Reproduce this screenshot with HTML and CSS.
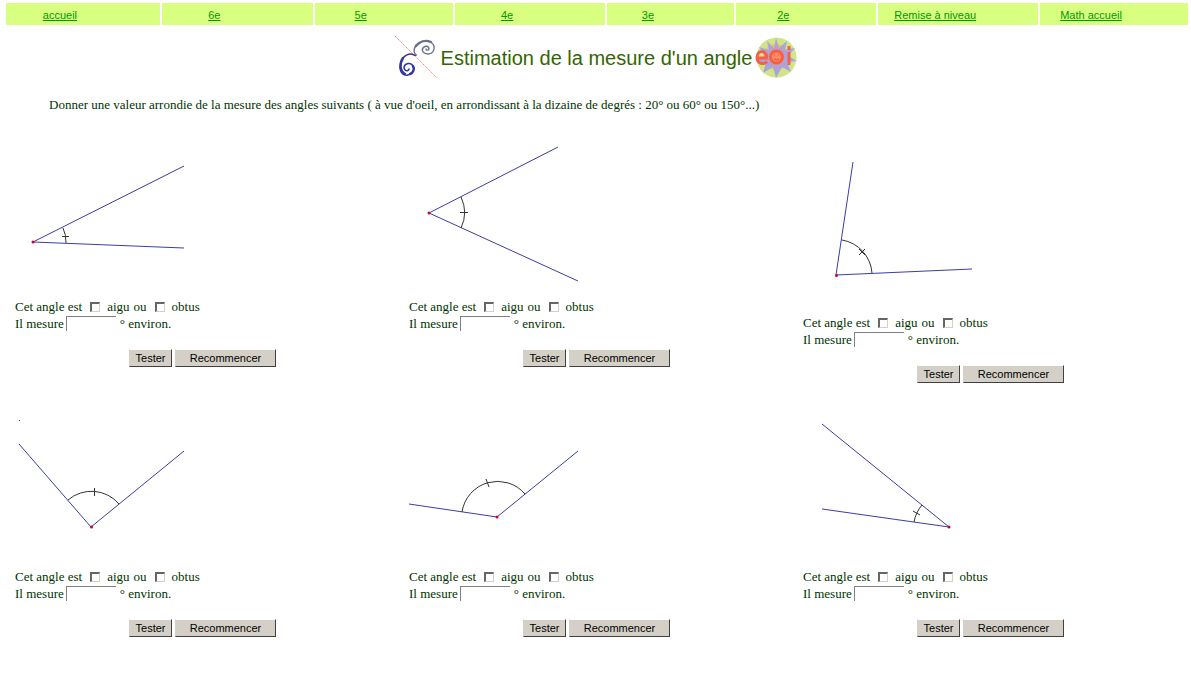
FILE: index.html
```html
<!DOCTYPE html>
<html lang="fr">
<head>
<meta charset="utf-8">
<title>Estimation de la mesure d'un angle</title>
<link rel="stylesheet" href="styles.css">
</head>
<body>
<nav class="menu">
  <span class="cell"><a href="#">accueil</a></span>
  <span class="cell"><a href="#">6e</a></span>
  <span class="cell"><a href="#">5e</a></span>
  <span class="cell"><a href="#">4e</a></span>
  <span class="cell"><a href="#">3e</a></span>
  <span class="cell"><a href="#">2e</a></span>
  <span class="cell"><a href="#">Remise à niveau</a></span>
  <span class="cell"><a href="#">Math accueil</a></span>
</nav>
<header class="title">
  <svg class="logo" viewBox="0 0 43 43" aria-hidden="true">
    <path d="M0 0L42 42" stroke="#ff8080" fill="none" stroke-dasharray="1.5 .7"/>
    <g fill="none" stroke="#3038a0" stroke-linecap="round">
      <path d="M21 19C19 20 18 18 16 18C9 18 5 25 5 31C5 37 9 40 13 39C18 38 20 34 18 30C16 26 10 27 9 31C9 35 13 36 14 33" stroke-width="1.5"/>
      <path d="M8 22C4 28 5 35 10 38M18 30C20 33 18 37 15 38" stroke-width="2.4"/>
    </g>
    <g fill="none" stroke="#6c6f8c" stroke-linecap="round">
      <path d="M21 19C17 15 20 9 24 7C29 3 37 5 39 10C40 15 37 18 33 18C29 18 26 15 28 12C30 9 34 10 34 13C33 15 31 14 31 13" stroke-width="1.4"/>
      <path d="M21 10C25 5 31 4 36 6" stroke-width="2.4"/>
    </g>
  </svg>
  <h1>Estimation de la mesure d'un angle</h1>
  <svg class="logo" viewBox="0 0 43 43" aria-hidden="true">
    <circle cx="21.500" cy="21.500" r="20" fill="#cfe588"/>
    <circle cx="21" cy="21" r="13" fill="#f9bd62"/>
    <path d="M21 2L24 12L32 5L30 14L40 12L33 20L42 25L32 26L36 36L27 31L21 42L18 31L8 37L11 27L1 25L10 20L4 11L14 14L12 5L19 12Z" fill="#aaa3dc"/>
    <circle cx="21.500" cy="21" r="8" fill="#ff8d5e"/>
    <g fill="none" stroke="#f4604a" stroke-width="3">
      <path d="M2 22H11.500C12 13.500 2 13.500 2 21.500C2 28 9 29 12 25.500"/>
      <circle cx="21.500" cy="21" r="6"/>
      <path d="M34 16V29M34 10V14"/>
    </g>
    <path d="M19 19H20M23 19H24M19 23Q21.500 25 24 23" stroke="#e8483c" fill="none"/>
  </svg>
</header>
<main>
  <p class="intro">Donner une valeur arrondie de la mesure des angles suivants ( à vue d'oeil, en arrondissant à la dizaine de degrés : 20° ou 60° ou 150°...)</p>
  <div class="exercises">
    <form class="exercise">
      <svg class="figure" viewBox="0 0 180 158" role="img" aria-label="Angle 1">
        <path class="ray" d="M169 26L18 102L169 108"/>
        <path class="arc" d="M48 88A33 33 0 0 1 51 103M47 96.500H54"/>
        <circle class="vertex" cx="18" cy="102" r="1.5"/>
      </svg>
      <div class="line">Cet angle est <input type="checkbox" id="a1"><label for="a1">aigu</label> ou <input type="checkbox" id="o1"><label for="o1">obtus</label></div>
      <div class="line"><label for="m1">Il mesure</label><input type="text" id="m1"><span>° environ.</span></div>
      <div class="actions"><button type="button">Tester</button><button type="reset" class="wide">Recommencer</button></div>
    </form>
    <form class="exercise">
      <svg class="figure" viewBox="0 0 180 158" role="img" aria-label="Angle 2">
        <path class="ray" d="M149 7L20 73L169 141"/>
        <path class="arc" d="M52 57A36 36 0 0 1 52 88M51 72.500H59"/>
        <circle class="vertex" cx="20" cy="73" r="1.5"/>
      </svg>
      <div class="line">Cet angle est <input type="checkbox" id="a2"><label for="a2">aigu</label> ou <input type="checkbox" id="o2"><label for="o2">obtus</label></div>
      <div class="line"><label for="m2">Il mesure</label><input type="text" id="m2"><span>° environ.</span></div>
      <div class="actions"><button type="button">Tester</button><button type="reset" class="wide">Recommencer</button></div>
    </form>
    <form class="exercise">
      <svg class="figure tall" viewBox="0 0 180 174" role="img" aria-label="Angle 3">
        <path class="ray" d="M50 22L33 135L169 129"/>
        <path class="arc" d="M39 100A36 36 0 0 1 69 133M56 115L62 109M56 109L62 115"/>
        <circle class="vertex" cx="33.500" cy="135.500" r="1.5"/>
      </svg>
      <div class="line">Cet angle est <input type="checkbox" id="a3"><label for="a3">aigu</label> ou <input type="checkbox" id="o3"><label for="o3">obtus</label></div>
      <div class="line"><label for="m3">Il mesure</label><input type="text" id="m3"><span>° environ.</span></div>
      <div class="actions"><button type="button">Tester</button><button type="reset" class="wide">Recommencer</button></div>
    </form>
    <form class="exercise">
      <svg class="figure" viewBox="0 0 180 158" role="img" aria-label="Angle 4">
        <path class="ray" d="M4 34L76 117L169 41M4 10.500H5"/>
        <path class="arc" d="M53 90A36 36 0 0 1 104 94M79.500 78V86"/>
        <circle class="vertex" cx="76.500" cy="117" r="1.5"/>
      </svg>
      <div class="line">Cet angle est <input type="checkbox" id="a4"><label for="a4">aigu</label> ou <input type="checkbox" id="o4"><label for="o4">obtus</label></div>
      <div class="line"><label for="m4">Il mesure</label><input type="text" id="m4"><span>° environ.</span></div>
      <div class="actions"><button type="button">Tester</button><button type="reset" class="wide">Recommencer</button></div>
    </form>
    <form class="exercise">
      <svg class="figure" viewBox="0 0 180 158" role="img" aria-label="Angle 5">
        <path class="ray" d="M0 94L88 107L169 41"/>
        <path class="arc" d="M53 102A36 36 0 0 1 116 84M77 69L80 77"/>
        <circle class="vertex" cx="88" cy="107" r="1.5"/>
      </svg>
      <div class="line">Cet angle est <input type="checkbox" id="a5"><label for="a5">aigu</label> ou <input type="checkbox" id="o5"><label for="o5">obtus</label></div>
      <div class="line"><label for="m5">Il mesure</label><input type="text" id="m5"><span>° environ.</span></div>
      <div class="actions"><button type="button">Tester</button><button type="reset" class="wide">Recommencer</button></div>
    </form>
    <form class="exercise">
      <svg class="figure" viewBox="0 0 180 158" role="img" aria-label="Angle 6">
        <path class="ray" d="M19 14L146 117L19 99"/>
        <path class="arc" d="M111 112A36 36 0 0 1 119 95M110 101L117 105"/>
        <circle class="vertex" cx="146" cy="117" r="1.5"/>
      </svg>
      <div class="line">Cet angle est <input type="checkbox" id="a6"><label for="a6">aigu</label> ou <input type="checkbox" id="o6"><label for="o6">obtus</label></div>
      <div class="line"><label for="m6">Il mesure</label><input type="text" id="m6"><span>° environ.</span></div>
      <div class="actions"><button type="button">Tester</button><button type="reset" class="wide">Recommencer</button></div>
    </form>
  </div>
</main>
</body>
</html>
```
FILE: styles.css
```css
body {
  margin: 0;
  background: #fff;
  color: #003300;
  font: 13px/17px "Liberation Serif", "Times New Roman", serif;
}
.menu {
  display: grid;
  grid-template-columns: 154fr 151fr 138fr 151fr 127fr 140fr 160fr 148fr;
  gap: 2px;
  padding: 3px 3px 0 6px;
}
.cell {
  box-sizing: border-box;
  height: 22px;
  padding-right: 46px;
  background: #d9ff80;
  text-align: center;
  white-space: nowrap;
  font: 11px/24px "Liberation Sans", Arial, sans-serif;
}
.cell a { color: #009900; }
.title {
  display: flex;
  justify-content: center;
  align-items: center;
  gap: 3px;
  margin-top: 11px;
  padding-left: 2px;
}
.title h1 {
  margin: 0;
  color: #336600;
  font: 20px/24px "Liberation Sans", Arial, sans-serif;
}
.logo {
  width: 43px;
  height: 43px;
}
.intro {
  margin: 17px 49px 27px;
}
.exercises {
  display: grid;
  grid-template-columns: repeat(3, 1fr);
  row-gap: 27px;
  align-items: start;
  padding: 0 0 40px 15px;
  margin-right: -6px;
}
.figure {
  display: block;
  width: 180px;
  height: 158px;
}
.figure.tall { height: 174px; }
.ray { fill: none; stroke: #3c3ca8; }
.arc { fill: none; stroke: #333; }
.vertex { fill: #d00030; }
.line {
  display: flex;
  align-items: center;
  gap: 4px;
  height: 17px;
}
input[type="checkbox"] {
  appearance: none;
  width: 10px;
  height: 10px;
  margin: 0 3px 0 4px;
  border: 1px solid #d4d0c8;
  border-top: 2px solid #666;
  border-left: 2px solid #666;
  background: #fff;
  box-sizing: border-box;
}
input[type="text"] {
  box-sizing: border-box;
  width: 50px;
  height: 15px;
  margin-left: -2px;
  padding: 0 2px;
  border: 0 solid #808080;
  border-width: 1px 0 0 1px;
  background: #fff;
  font: inherit;
}
.actions {
  display: flex;
  gap: 3px;
  margin: 17px 0 0 114px;
}
button {
  box-sizing: border-box;
  width: 43px;
  height: 18px;
  padding: 0;
  border: 1px solid #404040;
  border-top-color: #fff;
  border-left-color: #d4d0c8;
  background: #d4d0c8;
  color: #000;
  font: 11px/15px "Liberation Sans", Arial, sans-serif;
}
button.wide { width: 101px; }
```
